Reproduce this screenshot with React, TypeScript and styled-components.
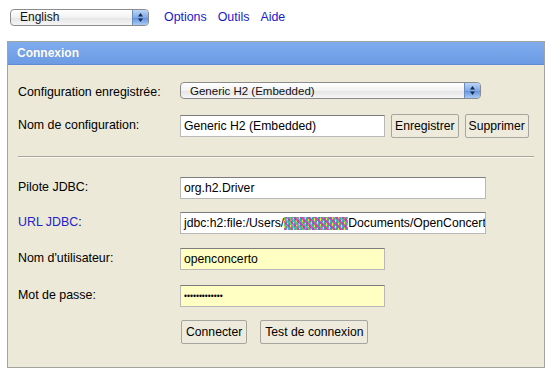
import React from "react";
import styled, { createGlobalStyle } from "styled-components";

const Global = createGlobalStyle`
  html, body { margin: 0; padding: 0; background: #ffffff; }
  body { font-family: "Liberation Sans", Arial, sans-serif; font-size: 13px; color: #000; }
`;

const Page = styled.div`
  width: 550px;
  height: 374px;
  position: relative;
  overflow: hidden;
`;

const TopBar = styled.div`
  display: flex;
  align-items: center;
  gap: 11px;
  padding: 8px 0 0 10px;
  height: 18px;
`;

const AquaSelect = styled.div<{ $w: number; $fs: number }>`
  width: ${(p) => p.$w}px;
  height: 17px;
  box-sizing: border-box;
  border: 1px solid #8b8b8b;
  border-radius: 4px;
  background: linear-gradient(#ffffff, #f2f2f2 50%, #e4e4e4 51%, #f6f6f6);
  display: flex;
  align-items: center;
  position: relative;
  overflow: hidden;
  font-size: ${(p) => p.$fs}px;
  color: #111;
  padding-left: 9px;
  margin-right: 4px;
`;

const Stepper = styled.div`
  position: absolute;
  right: 0;
  top: 0;
  bottom: 0;
  width: 15px;
  border-left: 1px solid #6a8bc0;
  background: linear-gradient(#bcd6f7, #7faae8 50%, #5d8fdd 51%, #a8cbf5);
  display: flex;
  align-items: center;
  justify-content: center;
`;

const NavLink = styled.a`
  color: #1a1acc;
  text-decoration: none;
  font-size: 12.4px;
`;

const Panel = styled.div`
  margin: 15px 0 0 7px;
  width: 538px;
  height: 327px;
  box-sizing: border-box;
  border: 1px solid #a3a3a0;
  background: #ece9d8;
  display: flex;
  flex-direction: column;
`;

const PanelHeader = styled.div`
  height: 22px;
  background: linear-gradient(#80acee, #6c9be4);
  border-bottom: 1px solid #5e8ad6;
  color: #fff;
  font-weight: bold;
  font-size: 12px;
  display: flex;
  align-items: center;
  padding-left: 9px;
  text-shadow: 0 0 1px rgba(0, 0, 0, 0.15);
`;

const Form = styled.div`
  display: grid;
  grid-template-columns: 162px 1fr;
  padding: 17px 10px 0 10px;
`;

const Label = styled.div`
  font-size: 12.4px;
  color: #000;
  padding-top: 3px;
`;

const LabelLink = styled.span`
  color: #2323c8;
`;

const Cell = styled.div<{ $h: number }>`
  display: flex;
  gap: 6px;
  height: ${(p) => p.$h}px;
`;

const Field = styled.div<{ $w: number; $yellow?: boolean }>`
  width: ${(p) => p.$w}px;
  height: 22px;
  box-sizing: border-box;
  border: 1px solid #b8b8b8;
  border-top-color: #7c7c7c;
  background: ${(p) => (p.$yellow ? "#ffffc4" : "#ffffff")};
  font-size: 12.2px;
  padding: 0 3px;
  display: flex;
  align-items: center;
  white-space: nowrap;
  overflow: hidden;
`;

const Dots = styled.span`
  font-size: 8.5px;
  letter-spacing: 0;
`;

const Noise = styled.span`
  display: inline-block;
  flex: none;
  width: 64px;
  height: 13px;
  background:
    repeating-linear-gradient(45deg, rgba(255, 0, 200, 0.55) 0 2px, transparent 2px 5px),
    repeating-linear-gradient(-45deg, rgba(0, 180, 80, 0.5) 0 2px, transparent 2px 4px),
    repeating-linear-gradient(90deg, #e7e33a 0 1px, #9a8cf0 1px 3px, #d9d9d9 3px 4px, #4ab0d8 4px 6px);
`;

const Button = styled.button<{ $pad: number }>`
  height: 24px;
  box-sizing: border-box;
  border: 1px solid #a6a6a0;
  border-radius: 2px;
  background: #eeebdc;
  font-family: "Liberation Sans", Arial, sans-serif;
  font-size: 12.2px;
  color: #000;
  padding: 0 ${(p) => p.$pad}px;
  margin-top: -1px;
`;

const Rule = styled.div`
  grid-column: 1 / 3;
  height: 0;
  border-top: 1px solid #a9a79c;
  border-bottom: 1px solid #f8f7f0;
  margin: 0 0 19px 0;
`;

const Buttons = styled.div`
  grid-column: 2;
  display: flex;
  gap: 13px;
  padding-left: 1px;
`;

const Arrows = () => (
  <svg width="7" height="11" viewBox="0 0 7 11">
    <path d="M3.5 1 L6 4.5 H1 Z" fill="#1b2a44" />
    <path d="M3.5 10 L6 6.5 H1 Z" fill="#1b2a44" />
  </svg>
);

export default function App() {
  return (
    <Page>
      <Global />
      <TopBar>
        <AquaSelect $w={139} $fs={12}>
          English
          <Stepper>
            <Arrows />
          </Stepper>
        </AquaSelect>
        <NavLink href="#">Options</NavLink>
        <NavLink href="#">Outils</NavLink>
        <NavLink href="#">Aide</NavLink>
      </TopBar>
      <Panel>
        <PanelHeader>Connexion</PanelHeader>
        <Form>
          <Label>Configuration enregistrée:</Label>
          <Cell $h={33}>
            <AquaSelect $w={301} $fs={11.5}>
              Generic H2 (Embedded)
              <Stepper>
                <Arrows />
              </Stepper>
            </AquaSelect>
          </Cell>
          <Label>Nom de configuration:</Label>
          <Cell $h={41}>
            <Field $w={205}>Generic H2 (Embedded)</Field>
            <Button $pad={3}>Enregistrer</Button>
            <Button $pad={3}>Supprimer</Button>
          </Cell>
          <Rule />
          <Label>Pilote JDBC:</Label>
          <Cell $h={35}>
            <Field $w={306}>org.h2.Driver</Field>
          </Cell>
          <Label>
            <LabelLink>URL JDBC</LabelLink>:
          </Label>
          <Cell $h={36}>
            <Field $w={306}>
              jdbc:h2:file:/Users/
              <Noise />
              Documents/OpenConcert
            </Field>
          </Cell>
          <Label>Nom d'utilisateur:</Label>
          <Cell $h={37}>
            <Field $w={205} $yellow>
              openconcerto
            </Field>
          </Cell>
          <Label>Mot de passe:</Label>
          <Cell $h={36}>
            <Field $w={205} $yellow>
              <Dots>•••••••••••••</Dots>
            </Field>
          </Cell>
          <Buttons>
            <Button $pad={4}>Connecter</Button>
            <Button $pad={4}>Test de connexion</Button>
          </Buttons>
        </Form>
      </Panel>
    </Page>
  );
}
